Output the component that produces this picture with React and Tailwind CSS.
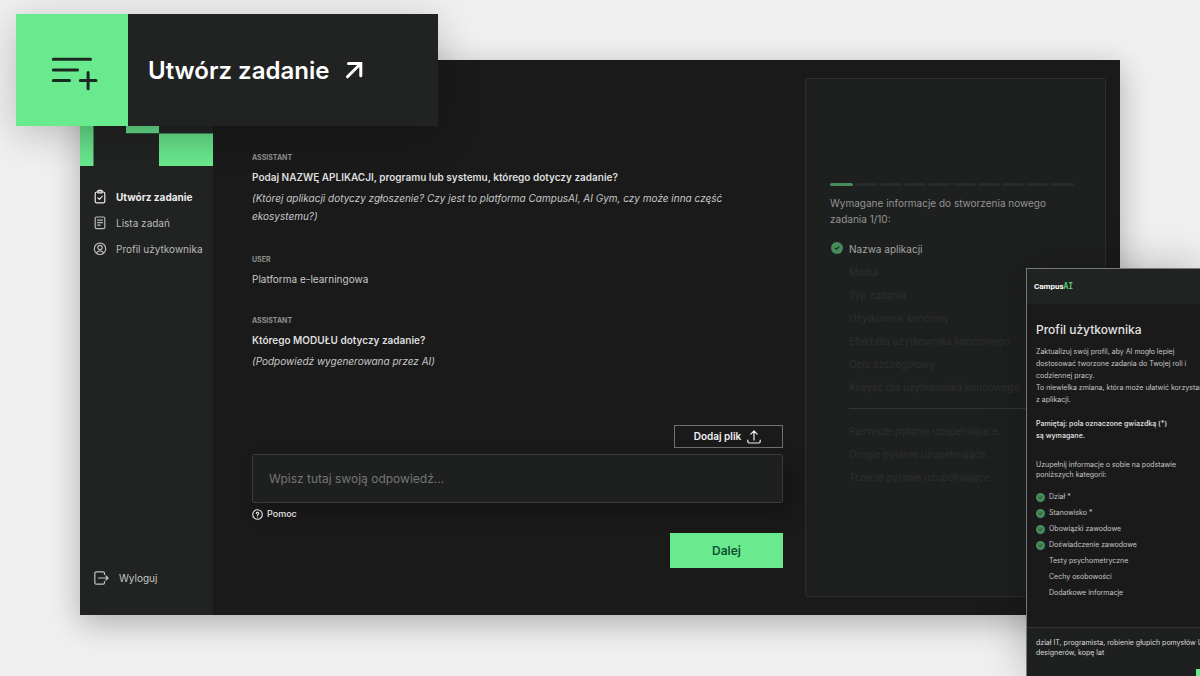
const steps = ['Moduł', 'Typ zadania', 'Użytkownik końcowy', 'Efekt dla użytkownika końcowego', 'Opis szczegółowy', 'Kożyść dla użytkownika końcowego'];
const questions = ['Pierwsze pytanie uzupełniające.', 'Drugie pytanie uzupełniające.', 'Trzecie pytanie uzupełniające.'];
const categories = [
  ['Dział *', true],
  ['Stanowisko *', true],
  ['Obowiązki zawodowe', true],
  ['Doświadczenie zawodowe', true],
  ['Testy psychometryczne', false],
  ['Cechy osobowości', false],
  ['Dodatkowe informacje', false],
];

function Icon({ size = 'size-4', children, width = 1.2, box = 16 }) {
  return (
    <svg aria-hidden="true" viewBox={`0 0 ${box} ${box}`} className={`${size} shrink-0`} fill="none" stroke="currentColor" strokeWidth={width} strokeLinecap="round" strokeLinejoin="round">
      {children}
    </svg>
  );
}

function CheckBadge({ size }) {
  return (
    <svg aria-hidden="true" viewBox="0 0 12 12" className={`${size} shrink-0`} fill="none">
      <circle cx="6" cy="6" r="6" fill="#478a5c" />
      <path d="M4.1 6.1l1.3 1.3 2.5-2.6" stroke="#1b2a20" strokeWidth="1.2" strokeLinecap="round" strokeLinejoin="round" />
    </svg>
  );
}

function Sidebar() {
  return (
    <aside className="flex w-[133px] shrink-0 flex-col bg-[#212322]">
      <svg aria-hidden="true" viewBox="0 0 133 106" className="h-[106px] w-full shrink-0">
        <defs>
          <linearGradient id="blocks" gradientUnits="userSpaceOnUse" x1="0" y1="60" x2="0" y2="106">
            <stop offset="0" stopColor="#5fd080" />
            <stop offset="1" stopColor="#6aea8e" />
          </linearGradient>
        </defs>
        <path d="M0 40H13.5V106H0zM46 40H79V73.3H46zM79 73.5H133V106H79z" fill="url(#blocks)" />
      </svg>
      <nav className="mt-[18px] flex flex-col text-[10px] text-[#b9baba]">
        <a href="#utworz" className="flex h-[26px] items-center gap-2 pl-3 font-bold text-[#ececec]">
          <Icon>
            <rect x="3.2" y="3" width="9.6" height="10.8" rx="1.6" />
            <path d="M5.7 3v-.6a1 1 0 0 1 1-1h2.6a1 1 0 0 1 1 1V3a1 1 0 0 1-1 1H6.7a1 1 0 0 1-1-1zM5.9 8.800l1.500 1.500 2.800-3" />
          </Icon>
          Utwórz zadanie
        </a>
        <a href="#lista" className="flex h-[26px] items-center gap-2 pl-3">
          <Icon>
            <rect x="3.2" y="2" width="9.6" height="11.6" rx="1.6" />
            <path d="M5.6 5.2h4.8M5.6 7.700h4.8M5.600 10.200h2.600" />
          </Icon>
          Lista zadań
        </a>
        <a href="#profil" className="flex h-[26px] items-center gap-2 pl-3 whitespace-nowrap">
          <Icon>
            <circle cx="8" cy="7.8" r="5.700" />
            <circle cx="8" cy="6.500" r="2.200" />
            <path d="M4.400 12c.700-1.500 2-2.200 3.600-2.200s2.900.7 3.600 2.200" />
          </Icon>
          Profil użytkownika
        </a>
      </nav>
      <a href="#wyloguj" className="mt-auto mb-6 flex h-[26px] items-center gap-2 pl-[13px] text-[10px] text-[#c4c5c5]">
        <Icon size="size-[18px]" box={18} width={1.2}>
          <path d="M11.500 5.500V4.300a1.500 1.500 0 0 0-1.500-1.500H3.300a1.500 1.500 0 0 0-1.500 1.500v9.400a1.500 1.500 0 0 0 1.500 1.500H10a1.500 1.500 0 0 0 1.500-1.500v-1.200M5.500 9H15M13 7l2 2-2 2" />
        </Icon>
        <span>Wyloguj</span>
      </a>
    </aside>
  );
}

function Message({ author, title, children }) {
  return (
    <article>
      <h3 className="text-[7px] leading-[10px] font-bold text-[#8e8f8f]">{author}</h3>
      {title && <p className="mt-[7px] text-[10px] leading-[14px] font-semibold text-[#dededf]">{title}</p>}
      {children}
    </article>
  );
}

function Conversation() {
  return (
    <main className="flex min-w-0 flex-1 flex-col pr-[22px] pl-[39px]">
      <div className="mt-[93px] flex flex-col gap-[30px]">
        <Message author="ASSISTANT" title="Podaj NAZWĘ APLIKACJI, programu lub systemu, którego dotyczy zadanie?">
          <p className="mt-[5px] max-w-[490px] text-[10px] leading-[18px] text-[#c8c8c9] italic">
            (Której aplikacji dotyczy zgłoszenie? Czy jest to platforma CampusAI, AI Gym, czy może inna część ekosystemu?)
          </p>
        </Message>
        <Message author="USER">
          <p className="mt-[7px] text-[10px] leading-[14px] text-[#c8c8c9]">Platforma e-learningowa</p>
        </Message>
        <Message author="ASSISTANT" title="Którego MODUŁU dotyczy zadanie?">
          <p className="mt-[5px] text-[10px] leading-[18px] text-[#c8c8c9] italic">(Podpowiedź wygenerowana przez AI)</p>
        </Message>
      </div>
      <form className="mt-auto mb-[47px] flex flex-col" onSubmit={(e) => e.preventDefault()}>
        <button type="button" className="flex h-[23px] w-[109px] items-center justify-center gap-1 self-end border border-[#707171] text-[10px] font-semibold text-[#f0f0f0]">
          Dodaj plik
          <Icon size="size-[18px]" box={18} width={1.2}>
            <path d="M9 12V3.500M5.800 6.200L9 3l3.200 3.200M2.800 12v1.500a1.500 1.500 0 0 0 1.500 1.500h9.400a1.500 1.500 0 0 0 1.500-1.500V12" />
          </Icon>
        </button>
        <input aria-label="Odpowiedź" placeholder="Wpisz tutaj swoją odpowiedź…" className="mt-[6px] h-[49px] w-full rounded-[2px] border border-[#3a3b3b] bg-[#1e201f] px-4 text-[12px] text-white shadow-[8px_10px_20px_rgba(0,0,0,0.25)] outline-none placeholder:text-[#747575]" />
        <a href="#pomoc" className="mt-[5px] flex h-3 items-center gap-1 self-start text-[9px] font-medium text-[#e4e4e4]">
          <Icon size="size-[11px]" box={12} width={1.2}>
            <circle cx="6" cy="6" r="5.200" />
            <path d="M4.700 5a1.300 1.300 0 1 1 1.900 1.100c-.4.2-.6.4-.6.800M6 8.600v.1" />
          </Icon>
          Pomoc
        </a>
        <button type="submit" className="mt-[13px] h-[35px] w-[113px] self-end bg-[#6aea8e] text-[12px] font-semibold text-[#0c5132]">Dalej</button>
      </form>
    </main>
  );
}

function Progress() {
  return (
    <section className="my-[18px] mr-[14px] w-[301px] shrink-0 rounded-[3px] border border-[#2c2e2d] bg-[#1e201f] pt-[104px] pl-6 text-[10px]">
      <div className="mr-[31px] flex gap-[2px]">
        {Array.from({ length: 10 }, (_, i) => (
          <span key={i} className={`h-[3px] flex-1 rounded-full ${i === 0 ? 'bg-[#478a5c]' : 'bg-[#292b2a]'}`} />
        ))}
      </div>
      <p className="mt-[9px] max-w-[235px] leading-4 text-[#929393]">Wymagane informacje do stworzenia nowego zadania 1/10:</p>
      <ul className="mt-[11px] text-[#2d2f2e]">
        <li className="flex h-[23px] items-center gap-[6px] pl-px text-[#a3a4a4]">
          <span className="self-start pt-1"><CheckBadge size="size-3" /></span>
          Nazwa aplikacji
        </li>
        {steps.map((s) => (
          <li key={s} className="flex h-[23px] items-center pl-[19px]">{s}</li>
        ))}
      </ul>
      <hr className="mt-[9px] mr-[31px] ml-[19px] border-[#343635]" />
      <ul className="mt-[11px] text-[#2d2f2e]">
        {questions.map((q) => (
          <li key={q} className="flex h-[23px] items-center pl-[19px]">{q}</li>
        ))}
      </ul>
    </section>
  );
}

function ProfilePanel() {
  return (
    <section className="absolute top-[268px] right-0 bottom-0 w-[174px] overflow-hidden border-t border-l border-[#777878] bg-[#1a1a1a] shadow-[0_0_40px_rgba(0,0,0,0.25)]">
      <div className="flex min-h-full w-[210px] flex-col text-[7px] text-[#c6c6c7]">
        <header className="flex h-[35px] items-center bg-[#212322] pl-[7px] text-[8px] font-bold text-white">
          <span className="font-['Roboto',sans-serif]">Campus</span>
          <span className="font-['DejaVu_Sans_Mono',monospace] text-[#55c578]">AI</span>
        </header>
        <div className="pl-[9px]">
          <h2 className="mt-[18px] text-[12px] leading-4 font-medium text-[#e2e2e3]">Profil użytkownika</h2>
          <p className="mt-2 leading-3 whitespace-nowrap">
            Zaktualizuj swój profil, aby AI mogło lepiej<br />
            dostosować tworzone zadania do Twojej roli i<br />
            codziennej pracy.<br />
            To niewielka zmiana, która może ułatwić korzystanie<br />
            z aplikacji.
          </p>
          <p className="mt-3 leading-3 font-semibold text-[#d8d8d9]">
            Pamiętaj: pola oznaczone gwiazdką (*)<br />
            są wymagane.
          </p>
          <p className="mt-[18px] leading-[10px]">
            Uzupełnij informacje o sobie na podstawie<br />
            poniższych kategorii:
          </p>
          <ul className="mt-[9px]">
            {categories.map(([name, done]) => (
              <li key={name} className="flex h-4 items-center gap-1">
                <span className="size-[9px]">{done && <CheckBadge size="size-[9px]" />}</span>
                {name}
              </li>
            ))}
          </ul>
        </div>
        <div className="mt-[26px] flex flex-1 flex-col border-t border-[#2f3332] bg-[#1e201f]">
          <textarea aria-label="Dodatkowe informacje" rows={2} defaultValue={'dział IT, programista, robienie głupich pomysłów UX\ndesignerów, kopę lat'} className="mt-[10px] block h-5 w-full resize-none overflow-hidden bg-transparent pl-[9px] leading-[10px] text-[#dcdcdd] outline-none" />
          <div className="mt-[11px] mr-px h-2 w-10 self-end bg-[#6aea8e]" />
        </div>
      </div>
    </section>
  );
}

function CreateTaskCard() {
  return (
    <a href="#utworz" className="absolute top-[14px] left-4 flex h-28 w-[422px] items-center bg-[#212322] text-white shadow-[0_8px_40px_rgba(0,0,0,0.22)]">
      <span className="flex size-28 items-center justify-center bg-[#6aea8e] text-[#1b2a20]">
        <svg aria-hidden="true" viewBox="0 0 48 36" className="mt-[6px] ml-1 h-9 w-12" fill="none" stroke="currentColor" strokeWidth="3" strokeLinecap="round">
          <path d="M3.300 4.200H40.500M3.300 15H27.500M3.300 25.600H19.500M30.300 25.600H46M38.100 17.500V33.700" />
        </svg>
      </span>
      <span className="ml-5 pt-[2px] text-[24px] font-semibold">Utwórz zadanie</span>
      <svg aria-hidden="true" viewBox="0 0 20 20" className="ml-[15px] size-5" fill="none" stroke="currentColor" strokeWidth="3" strokeLinecap="round" strokeLinejoin="miter">
        <path d="M4.500 3.500H16.800V15.800M16.800 3.500L3.500 16.800" />
      </svg>
    </a>
  );
}

export default function App() {
  return (
    <div className="relative min-h-screen overflow-hidden bg-[#f0f0f0] px-20 pt-[60px] pb-[61px] font-['Inter',sans-serif]">
      <div className="flex min-h-[555px] bg-[#1a1a1a] shadow-[0_8px_30px_rgba(0,0,0,0.28)]">
        <Sidebar />
        <Conversation />
        <Progress />
      </div>
      <CreateTaskCard />
      <ProfilePanel />
    </div>
  );
}
